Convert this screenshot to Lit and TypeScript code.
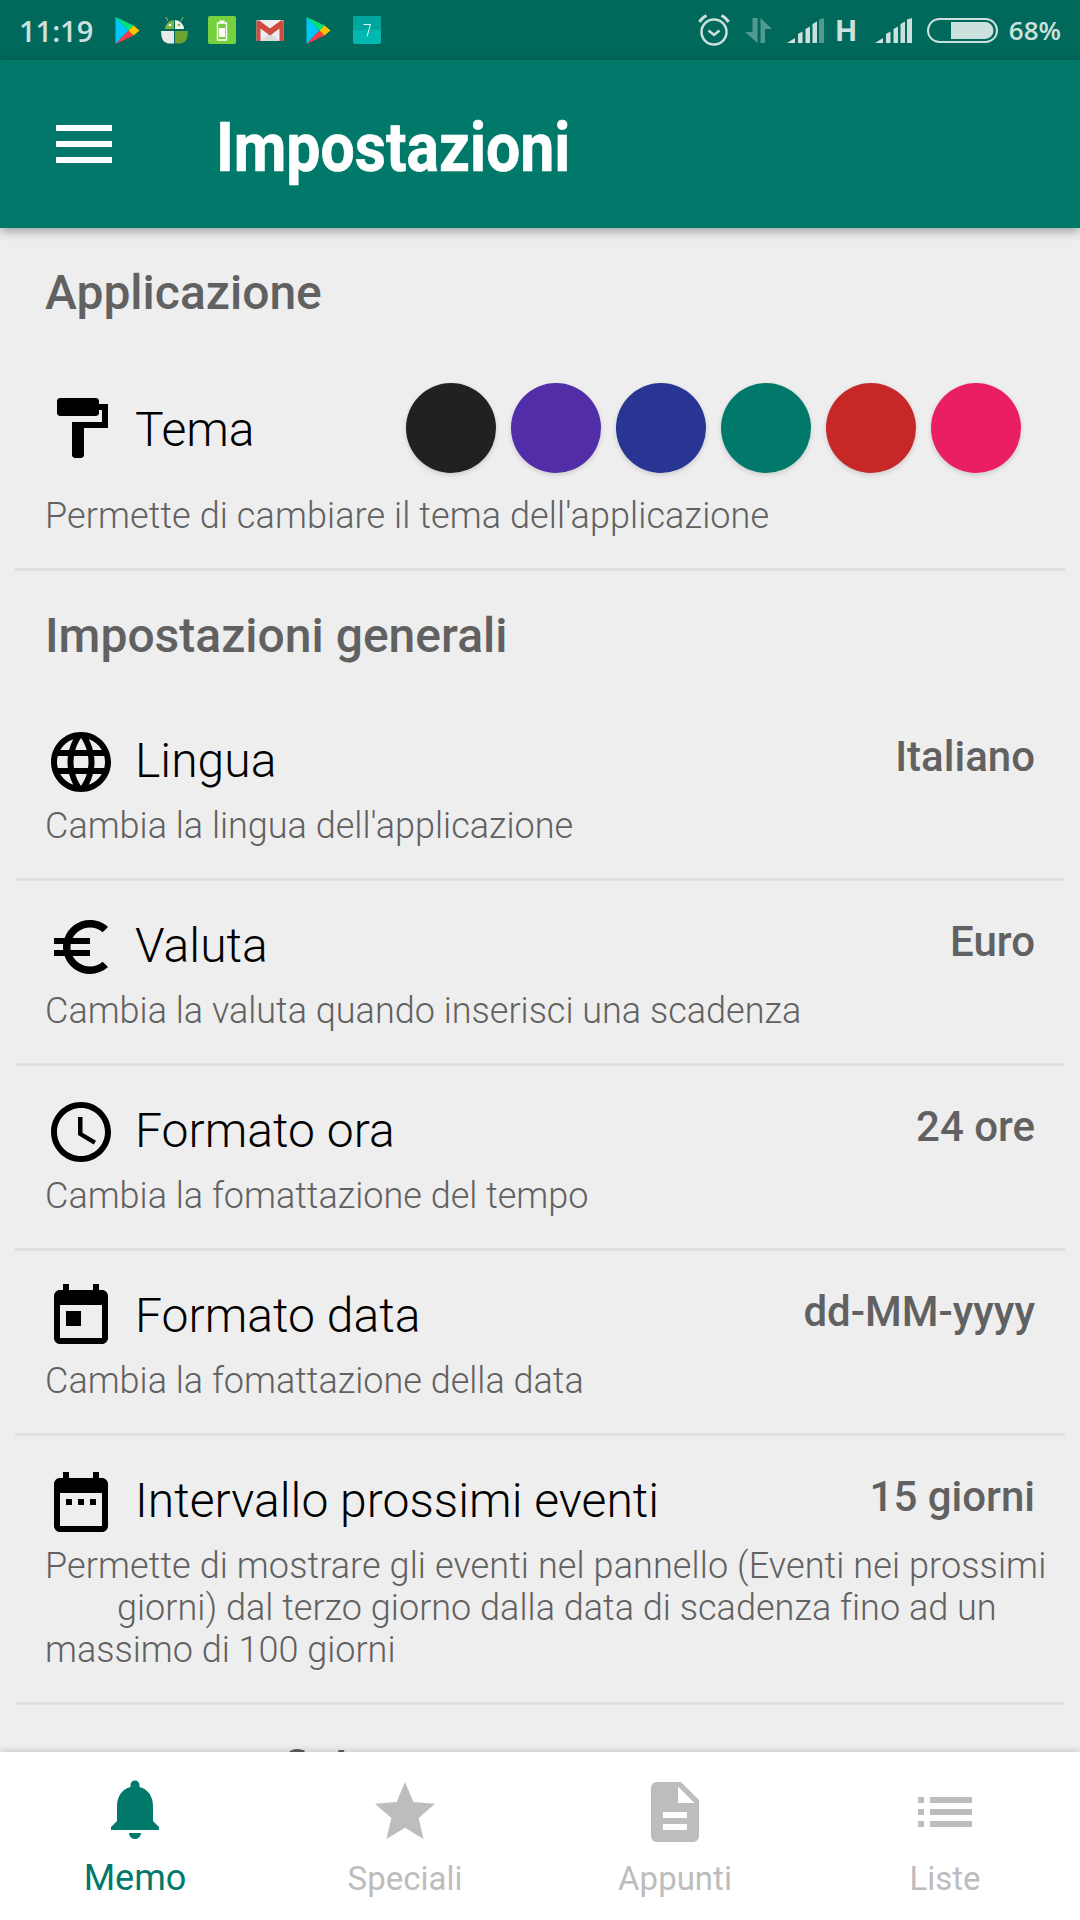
import { LitElement, html, css, svg } from "lit";
import { customElement } from "lit/decorators.js";

const swatches = ["#212121", "#512da8", "#283593", "#00796b", "#c62828", "#e91e63"];

// material style icons, 24 unit box
const icons: Record<string, unknown> = {
  roller: svg`<path d="M18 4V3c0-.55-.45-1-1-1H5c-.55 0-1 .45-1 1v4c0 .55.45 1 1 1h12c.55 0 1-.45 1-1V6h1v4H9v11c0 .55.45 1 1 1h2c.55 0 1-.45 1-1v-9h8V4h-3z"/>`,
  globe: svg`<path d="M12 2C6.48 2 2 6.48 2 12s4.48 10 10 10 10-4.48 10-10S17.52 2 12 2zm6.93 6h-2.95c-.32-1.25-.78-2.45-1.38-3.56 1.84.63 3.37 1.91 4.33 3.56zM12 4.04c.83 1.2 1.48 2.53 1.91 3.96h-3.82c.43-1.43 1.08-2.76 1.91-3.96zM4.26 14C4.1 13.36 4 12.69 4 12s.1-1.36.26-2h3.38c-.08.66-.14 1.32-.14 2s.06 1.34.14 2H4.26zm.82 2h2.95c.32 1.25.78 2.45 1.38 3.56-1.84-.63-3.37-1.9-4.33-3.56zm2.95-8H5.08c.96-1.66 2.49-2.93 4.33-3.56C8.81 5.55 8.35 6.75 8.03 8zM12 19.96c-.83-1.2-1.48-2.53-1.91-3.96h3.82c-.43 1.43-1.08 2.76-1.91 3.96zM14.34 14H9.66c-.09-.66-.16-1.32-.16-2s.07-1.35.16-2h4.68c.09.65.16 1.32.16 2s-.07 1.34-.16 2zm.25 5.56c.6-1.11 1.06-2.31 1.38-3.56h2.95c-.96 1.65-2.49 2.93-4.33 3.56zM16.36 14c.08-.66.14-1.32.14-2s-.06-1.34-.14-2h3.38c.16.64.26 1.31.26 2s-.1 1.36-.26 2h-3.38z"/>`,
  euro: svg`<path d="M15 18.5c-2.51 0-4.68-1.42-5.76-3.5H15v-2H8.58c-.05-.33-.08-.66-.08-1s.03-.67.08-1H15V9H9.24C10.32 6.92 12.5 5.5 15 5.5c1.61 0 3.09.59 4.23 1.57L21 5.3C19.41 3.87 17.3 3 15 3c-3.92 0-7.24 2.51-8.48 6H3v2h3.06c-.04.33-.06.66-.06 1s.02.67.06 1H3v2h3.52c1.24 3.49 4.56 6 8.48 6 2.31 0 4.41-.87 6-2.3l-1.78-1.77c-1.13.98-2.6 1.57-4.22 1.57z"/>`,
  clock: svg`<path d="M11.99 2C6.47 2 2 6.48 2 12s4.47 10 9.99 10C17.52 22 22 17.52 22 12S17.52 2 11.99 2zM12 20c-4.42 0-8-3.58-8-8s3.58-8 8-8 8 3.58 8 8-3.58 8-8 8z"/><path d="M12.5 7H11v6l5.25 3.15.75-1.23-4.5-2.67z"/>`,
  // this one sits a touch higher in its row
  event: svg`<path d="M19 3h-1V1h-2v2H8V1H6v2H5c-1.11 0-2 .9-2 2v14c0 1.1.89 2 2 2h14c1.1 0 2-.9 2-2V5c0-1.1-.9-2-2-2zm0 16H5V8h14v11z"/><path d="M7 10h5v5H7z"/>`,
  dots: svg`<path d="M19 4h-1V2h-2v2H8V2H6v2H5c-1.11 0-2 .9-2 2v14c0 1.1.89 2 2 2h14c1.1 0 2-.9 2-2V6c0-1.1-.9-2-2-2zm0 16H5V9h14v11z"/><path d="M7 11h2v2H7zM11 11h2v2h-2zM15 11h2v2h-2z"/>`,
  bell: svg`<path d="M12 21c1.1 0 2-.9 2-2h-4c0 1.1.9 2 2 2zm6-6v-5c0-3.07-1.63-5.64-4.500-6.320V3c0-.83-.67-1.500-1.500-1.500s-1.500.67-1.500 1.500v.68C7.640 4.360 6 6.920 6 10v5l-2 2v1h16v-1l-2-2z"/>`,
  star: svg`<path d="M12 17.27L18.18 21l-1.64-7.03L22 9.24l-7.19-.61L12 2 9.19 8.63 2 9.24l5.46 4.73L5.82 21z"/>`,
  note: svg`<path d="M14 2H6c-1.1 0-2 .9-2 2v16c0 1.1.9 2 2 2h12c1.1 0 2-.9 2-2V8l-6-6zm2 16H8v-2h8v2zm0-4H8v-2h8v2zm-3-5V3.5L18.5 9H13z"/>`,
  list: svg`<path d="M3 13h2v-2H3v2zm0 4h2v-2H3v2zm0-8h2V7H3v2zm4 4h14v-2H7v2zm0 4h14v-2H7v2zM7 7v2h14V7H7z"/>`,
};

const playIcon = svg`<svg class="play" viewBox="0 0 24 27" width="25" height="27">
  <path d="M0 0v27l13-13.5z" fill="#00c8ff"/>
  <path d="M0 0l13 13.5 5-5z" fill="#00e676"/>
  <path d="M0 27l13-13.5 5 5z" fill="#ff3a44"/>
  <path d="M18 8.5l6 5-6 5-5-5z" fill="#ffc400"/>
</svg>`;

const signal = svg`<path d="M0 25l8-5v5zM11 25v-9l4.500-2.500V25zM18.500 25V11l4.500-2.500V25zM25.500 25V6l4.500-2.500V25z"/>`;

const rows = [
  { icon: "globe", title: "Lingua", value: "Italiano", sub: "Cambia la lingua dell'applicazione" },
  { icon: "euro", title: "Valuta", value: "Euro", sub: "Cambia la valuta quando inserisci una scadenza" },
  { icon: "clock", title: "Formato ora", value: "24 ore", sub: "Cambia la fomattazione del tempo" },
  { icon: "event", title: "Formato data", value: "dd-MM-yyyy", sub: "Cambia la fomattazione della data" },
];

const tabs = [
  { icon: "bell", label: "Memo", active: true },
  { icon: "star", label: "Speciali", active: false },
  { icon: "note", label: "Appunti", active: false },
  { icon: "list", label: "Liste", active: false },
];

@customElement("app-root")
export class AppRoot extends LitElement {
  static styles = css`
    :host {
      display: flex;
      flex-direction: column;
      width: 1080px;
      height: 1920px;
      overflow: hidden;
      background: #eeeeee;
      font-family: Roboto, "Liberation Sans", sans-serif;
    }

    /* status bar */
    .status {
      height: 60px;
      flex: none;
      display: flex;
      align-items: center;
      padding: 0 19px;
      background: #00695c;
      color: #cce0dd;
      font-family: "Open Sans", Roboto, sans-serif;
      font-weight: 600;
    }
    .time { width: 96px; font-size: 29px; }
    .notifs { display: flex; align-items: center; flex: 1; }
    .notifs svg { display: block; flex: none; }
    .robot { margin-left: 21px; }
    .batt { margin-left: 20px; }
    .gmail { margin-left: 20px; }
    .play2 { margin-left: 22px; }
    .cal { margin-left: 22px; }
    .sys { display: flex; align-items: center; }
    .sys svg { display: block; flex: none; }
    .sys-gap { margin-left: 15px; }
    .h { font-size: 30px; font-weight: 700; margin: 0 18px 0 12px; font-family: Roboto, sans-serif; }
    .pct { margin-left: 11px; font-size: 26px; }

    /* toolbar */
    .toolbar {
      height: 168px;
      flex: none;
      display: flex;
      align-items: center;
      background: #00796b;
      box-shadow: 0 3px 10px rgba(0, 0, 0, 0.35);
      position: relative;
      z-index: 2;
    }
    .burger {
      width: 56px;
      margin-left: 56px;
      display: flex;
      flex-direction: column;
      gap: 10px;
    }
    .burger i { display: block; height: 6px; background: #fff; }
    .title {
      margin-left: 104px;
      padding-top: 8px;
      color: #fff;
      font-size: 68px;
      font-weight: 700;
      -webkit-text-stroke: 0.7px #fff;
      transform: scaleX(0.893);
      transform-origin: left center;
      white-space: nowrap;
      line-height: 1;
    }

    /* content */
    .content { flex: 1; min-height: 0; overflow: hidden; padding: 0 15px; }
    .head {
      font-size: 48px;
      font-weight: 500;
      color: #616161;
      padding: 0 30px;
      line-height: 56px;
      height: 56px;
      margin-top: 37px;
      white-space: nowrap;
    }
    .head.peek { margin-top: 37px; }
    .sep { height: 3px; background: #e0e0e0; }
    .theme-row {
      display: flex;
      align-items: center;
      margin-top: 62px;
      padding: 0 44px 0 30px;
    }
    .swatches { display: flex; gap: 15px; margin-left: auto; }
    .swatch {
      width: 90px;
      height: 90px;
      border-radius: 50%;
      box-shadow: 0 2px 5px rgba(0, 0, 0, 0.15);
    }
    .row { display: flex; align-items: center; padding: 0 30px; }
    .theme-row .row { padding: 0; }
    svg.ic { width: 72px; height: 72px; fill: #000; flex: none; margin-right: 18px; }
    .name { font-size: 48px; font-weight: 300; color: #000; line-height: 60px; letter-spacing: 0.04px; margin-top: -2px; }
    .theme-row .name { margin-top: 4px; }
    .val {
      margin-left: auto;
      align-self: flex-start;
      margin-top: 6px;
      font-size: 42px;
      font-weight: 500;
      color: #616161;
      line-height: 50px;
    }
    .sub {
      font-size: 36px;
      font-weight: 300;
      color: #616161;
      line-height: 42px;
      padding: 0 30px;
      white-space: nowrap;
    }
    .sub .wide { display: block; letter-spacing: 0.1px; }
    .sub .ind { display: block; padding-left: 72px; letter-spacing: 0.02px; }
    .theme-sub { margin-top: 22px; height: 73px; }
    .items { margin-top: 32px; }
    .item { height: 182px; padding-top: 30px; box-sizing: border-box; }
    .item.long { height: 266px; }
    .item .sub { margin-top: 7px; }

    /* bottom nav */
    .nav {
      height: 168px;
      flex: none;
      display: grid;
      grid-template-columns: repeat(4, 1fr);
      background: #fff;
      box-shadow: 0 -2px 6px rgba(0, 0, 0, 0.14);
      position: relative;
      z-index: 2;
    }
    .tab {
      display: flex;
      flex-direction: column;
      align-items: center;
      color: #bdbdbd;
      font-size: 33px;
      padding-top: 24px;
    }
    .tab svg { width: 72px; height: 72px; fill: #bdbdbd; }
    .tab span { margin-top: 10px; line-height: 42px; }
    .tab.on { color: #00796b; font-size: 36px; }
    .tab.on svg { fill: #00796b; }
    .tab.on span { margin-top: 9px; }
  `;

  icon(name: string) {
    return html`<svg class="ic" viewBox="0 0 24 24">${icons[name]}</svg>`;
  }

  renderStatus() {
    return html`<div class="status">
      <span class="time">11:19</span>
      <div class="notifs">
        ${playIcon}
        <svg class="robot" width="27" height="27" viewBox="0 0 27 27">
          <path d="M4 12a9.500 9.500 0 0 1 9-9v9z" fill="#7cb342"/>
          <path d="M14 3a9.500 9.500 0 0 1 9 9h-9z" fill="#eef3ea"/>
          <path d="M0 14h13v12.500H7q-7-1-7-12.500z" fill="#e8ebe6"/>
          <path d="M14 14h13q0 11.500-7 12.500h-6z" fill="#6ea32f"/>
          <circle cx="9" cy="8" r="1.300" fill="#fff"/>
          <circle cx="18" cy="8" r="1.300" fill="#7cb342"/>
          <path d="M7 4L5 0M20 4l2-4" stroke="#8bc34a" stroke-width="1"/>
        </svg>
        <svg class="batt" width="28" height="28" viewBox="0 0 28 28">
          <rect width="28" height="28" rx="2" fill="#76d13f"/>
          <path d="M9.500 7h9v17h-9z" fill="none" stroke="#fff" stroke-width="1.400"/>
          <path d="M11.500 4.500h5V7h-5z" fill="#fff"/>
          <path d="M11 12h6v9h-6z" fill="#fff"/>
        </svg>
        <svg class="gmail" width="28" height="21" viewBox="0 0 27 21">
          <rect width="27" height="21" rx="1" fill="#eeeeee"/>
          <path d="M4 21l9.500-8 9.500 8z" fill="#dcdcdc"/>
          <path d="M0 2v18q0 1 1 1h3V8.500l9.500 7 9.500-7V21h3q1 0 1-1V2l-2-2-11.500 8.500L2 0z" fill="#d04a3f"/>
        </svg>
        <span class="play2">${playIcon}</span>
        <svg class="cal" width="28" height="28" viewBox="0 0 28 28">
          <rect width="28" height="28" rx="2" fill="#00b8b0"/>
          <path d="M0 2q0-2 2-2h24q2 0 2 2v12H0z" fill="#00a59e"/>
          <path d="M10.500 8.500h7l-3.500 12" fill="none" stroke="#fff" stroke-width="0.900"/>
        </svg>
      </div>
      <div class="sys">
        <svg width="32" height="32" viewBox="0 0 32 32" fill="none" stroke="#cce0dd">
          <circle cx="16" cy="18" r="12.500" stroke-width="2.500"/>
          <path d="M10.500 16.500l5.500 4.500 5.500-4.500" stroke-width="2.500"/>
          <path d="M1.500 8q2-4 7-6.500M30.500 8q-2-4-7-6.500" stroke-width="3"/>
        </svg>
        <svg class="sys-gap" width="27" height="25" viewBox="0 0 27 25" fill="#cce0dd" fill-opacity=".4">
          <path d="M7.500 0h5v25l-12.500-11h7.500z"/>
          <path d="M15.500 0l11.500 11h-7v14h-4.500z"/>
        </svg>
        <svg class="sys-gap" width="37" height="25" viewBox="0 0 37 25" fill="#cce0dd">
          ${signal}
          <path d="M32 25V1.500L37 0v25z" fill-opacity=".4"/>
        </svg>
        <span class="h">H</span>
        <svg width="37" height="25" viewBox="0 0 37 25" fill="#cce0dd">
          ${signal}
          <path d="M32 25V1.500L37 0v25z"/>
        </svg>
        <svg class="sys-gap" width="71" height="25" viewBox="0 0 71 25">
          <rect x="1" y="1" width="69" height="23" rx="11.500" fill="none" stroke="#cce0dd" stroke-width="2"/>
          <path d="M24 4h34a8.500 8.500 0 0 1 0 17H24z" fill="#cce0dd"/>
        </svg>
        <span class="pct">68%</span>
      </div>
    </div>`;
  }

  renderItem(r: { icon: string; title: string; value: string; sub: string }) {
    return html`<div class="item">
        <div class="row">
          ${this.icon(r.icon)}
          <span class="name">${r.title}</span>
          <span class="val">${r.value}</span>
        </div>
        <div class="sub">${r.sub}</div>
      </div>
      <div class="sep"></div>`;
  }

  render() {
    return html`
      ${this.renderStatus()}
      <div class="toolbar">
        <div class="burger"><i></i><i></i><i></i></div>
        <div class="title">Impostazioni</div>
      </div>
      <div class="content">
        <div class="head">Applicazione</div>
        <div class="theme-row">
          <div class="row">
            ${this.icon("roller")}
            <span class="name">Tema</span>
          </div>
          <div class="swatches">
            ${swatches.map((c) => html`<div class="swatch" style="background:${c}"></div>`)}
          </div>
        </div>
        <div class="sub theme-sub"><span class="wide">Permette di cambiare il tema dell'applicazione</span></div>
        <div class="sep"></div>
        <div class="head">Impostazioni generali</div>
        <div class="items">
          ${rows.map((r) => this.renderItem(r))}
          <div class="item long">
            <div class="row">
              ${this.icon("dots")}
              <span class="name">Intervallo prossimi eventi</span>
              <span class="val">15 giorni</span>
            </div>
            <div class="sub">
              <span class="wide">Permette di mostrare gli eventi nel pannello (Eventi nei prossimi</span>
              <span class="ind">giorni) dal terzo giorno dalla data di scadenza fino ad un</span>
              massimo di 100 giorni
            </div>
          </div>
          <div class="sep"></div>
        </div>
        <div class="head peek">Centro notifiche</div>
      </div>
      <div class="nav">
        ${tabs.map(
          (t) => html`<div class="tab ${t.active ? "on" : ""}">
            <svg viewBox="0 0 24 24">${icons[t.icon]}</svg>
            <span>${t.label}</span>
          </div>`
        )}
      </div>
    `;
  }
}
